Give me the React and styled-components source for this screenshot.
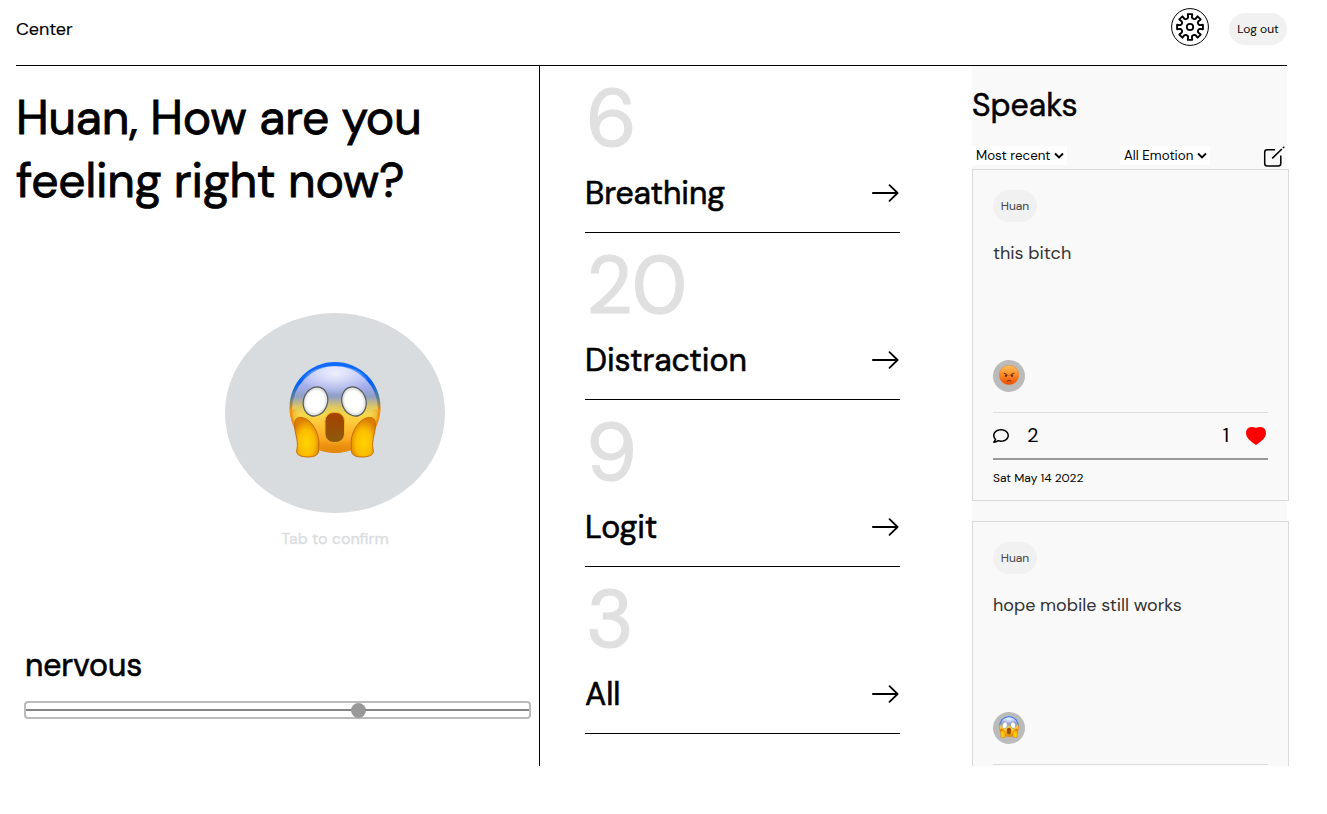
import React from "react";
import styled, { createGlobalStyle } from "styled-components";
import { FaRegComment } from "react-icons/fa";

const GlobalStyle = createGlobalStyle`
  *, *::before, *::after { box-sizing: border-box; }
  body {
    margin: 0;
    background: #fff;
    color: #000;
    font-family: "DM Sans", Lato, "Liberation Sans", sans-serif;
    overflow: hidden;
  }
  h1, h2, h3, p { margin: 0; font-weight: 400; }
  button, select { font-family: inherit; color: inherit; }
  svg { display: block; flex: none; }
`;

const Page = styled.div`
  width: 1271px;
  margin-left: 16px;
`;

const Header = styled.header`
  display: flex;
  justify-content: space-between;
  height: 66px;
  border-bottom: 1px solid #000;
`;

const Brand = styled.div`
  padding-top: 17px;
  font-size: 18px;
  line-height: 24px;
  letter-spacing: -0.1px;
  -webkit-text-stroke: 0.15px #000;
`;

const Actions = styled.div`
  display: flex;
  gap: 20px;
  padding-top: 8px;
`;

const Pill = styled.button`
  width: ${(p) => p.$width}px;
  height: 32px;
  margin-top: ${(p) => p.$offset || 0}px;
  padding: 0;
  border: 0;
  border-radius: 16px;
  background: #f1f1f1;
  color: ${(p) => p.$color || "#000"};
  font-size: 12px;
  line-height: 32px;
  white-space: nowrap;
`;

const Body = styled.main`
  display: grid;
  grid-template-columns: 569px 387px 315px;
  height: 700px;
`;

const Mood = styled.section`
  display: flex;
  flex-direction: column;
  width: 524px;
  height: 700px;
  border-right: 1px solid #000;
`;

const Greeting = styled.h1`
  height: 126px;
  margin-top: 20px;
  font-size: 48px;
  line-height: 63px;
  letter-spacing: -0.17px;
  white-space: nowrap;
  -webkit-text-stroke: 0.9px #000;
`;

const MoodPicker = styled.div`
  display: flex;
  flex-direction: column;
  align-items: center;
  width: 220px;
  margin: 101px 0 0 209px;
`;

const MoodOval = styled.div`
  display: flex;
  justify-content: center;
  width: 220px;
  height: 200px;
  padding-top: 48px;
  border-radius: 50%;
  background: #d8dcdf;
`;

const Hint = styled.p`
  margin-top: 14px;
  color: #d8dcdf;
  font-size: 16px;
  line-height: 24px;
  -webkit-text-stroke: 0.3px #d8dcdf;
`;

const MoodLabel = styled.h2`
  margin: 94px 0 0 9px;
  font-size: 32px;
  line-height: 40px;
  letter-spacing: -0.1px;
  -webkit-text-stroke: 0.6px #000;
`;

const Slider = styled.div`
  display: flex;
  align-items: center;
  width: 507px;
  height: 18px;
  margin: 16px 0 0 8px;
  border: 2px solid #bbb;
  border-radius: 4px;
`;

const Track = styled.div`
  flex: ${(p) => p.$share} 1 0;
  height: 2px;
  background: #858585;
`;

const Thumb = styled.div`
  flex: none;
  width: 15px;
  height: 15px;
  margin: 0 -1px;
  border-radius: 50%;
  background: #999;
`;

const Activities = styled.section`
  width: 315px;
`;

const Activity = styled.div`
  height: 167px;
  padding-top: 3px;
  border-bottom: 1px solid #000;
`;

const Count = styled.div`
  height: 99px;
  padding-left: 1px;
  font-size: 81px;
  line-height: 100px;
  color: #e0e0e0;
  -webkit-text-stroke: 1.2px #e0e0e0;
`;

const ActivityRow = styled.div`
  display: flex;
  align-items: center;
  justify-content: space-between;
  height: 50px;
`;

const ActivityName = styled.h2`
  font-size: 32px;
  line-height: 50px;
  letter-spacing: -0.05px;
  -webkit-text-stroke: 0.6px #000;
`;

const Feed = styled.section`
  width: 315px;
  height: 700px;
  background: #f9f9f9;
`;

const FeedTitle = styled.h2`
  padding-top: 18px;
  font-size: 32px;
  line-height: 42px;
  -webkit-text-stroke: 0.5px #000;
`;

const Filters = styled.div`
  display: flex;
  align-items: flex-start;
  justify-content: space-between;
  height: 23px;
  margin-top: 20px;
  padding-right: 2px;
`;

const Filter = styled.div`
  display: flex;
  align-items: center;
  justify-content: space-between;
  width: ${(p) => p.$width}px;
  height: 19px;
  padding: 0 3px 0 4px;
  background: #fff;
  font-size: 13.33px;
  white-space: nowrap;
`;

const CardList = styled.div`
  display: flex;
  flex-direction: column;
  gap: 20px;
  width: 317px;
  height: 597px;
  overflow: hidden;
`;

const Card = styled.article`
  flex: none;
  height: 332px;
  padding: 20px;
  border: 1px solid #d8dadc;
  background: #f9f9f9;
`;

const CardText = styled.p`
  height: 119px;
  margin-top: 19px;
  color: #333;
  font-size: 18px;
  line-height: 25px;
  letter-spacing: -0.04px;
`;

const Badge = styled.div`
  display: flex;
  justify-content: center;
  width: 32px;
  height: 32px;
  padding-top: ${(p) => p.$top}px;
  border-radius: 50%;
  background: #bbb;
`;

const Reactions = styled.div`
  display: flex;
  align-items: center;
  justify-content: space-between;
  height: 48px;
  margin-top: 20px;
  border-top: 1px solid #ddd;
  border-bottom: 2px solid #999;
  font-size: 20px;
  line-height: 26px;
`;

const Reaction = styled.div`
  display: flex;
  align-items: center;
  gap: ${(p) => p.$gap}px;
  padding-right: ${(p) => p.$end || 0}px;
`;

const ReactionCount = styled.span`
  padding-bottom: 1px;
`;

const DateLine = styled.p`
  margin-top: 8px;
  font-size: 12px;
  line-height: 20px;
`;

function GearIcon() {
  const points = [];
  const arc = Math.PI / 4;
  for (let i = 0; i < 8; i += 1) {
    const mid = i * arc - Math.PI / 2;
    [[-0.29, 8.9], [-0.19, 9.9], [-0.17, 13.1], [0.17, 13.1], [0.19, 9.9], [0.29, 8.9]].forEach(([a, r]) => {
      points.push(`${(19 + r * Math.cos(mid + a)).toFixed(2)},${(19 + r * Math.sin(mid + a)).toFixed(2)}`);
    });
  }
  return (
    <svg width="38" height="38" viewBox="0 0 38 38" fill="none" stroke="#000">
      <circle cx="19" cy="19" r="18.4" strokeWidth="1" />
      <polygon points={points.join(" ")} strokeWidth="1.9" strokeLinejoin="round" />
      <circle cx="19" cy="19" r="3.2" strokeWidth="1.8" />
    </svg>
  );
}

function ArrowIcon() {
  return (
    <svg width="29" height="20" viewBox="0 0 29 20" fill="none" stroke="#000" strokeWidth="1.8" strokeLinecap="round" strokeLinejoin="round">
      <path d="M1.9 10H26.6M18.5 2.2L26.6 10L18.5 17.8" />
    </svg>
  );
}

function ComposeIcon() {
  return (
    <svg width="22" height="22" viewBox="0 0 22 22" fill="none" stroke="#000" strokeWidth="1.5">
      <path d="M12 3.7H4.2A2.5 2.5 0 0 0 1.7 6.2V17.5A2.5 2.5 0 0 0 4.2 20H15.3A2.5 2.5 0 0 0 17.8 17.5V9.5" />
      <path d="M9.2 12.4L18.9 3M19.9 2L21.3 0.7" />
    </svg>
  );
}

function ChevronIcon() {
  return (
    <svg width="10" height="8" viewBox="0 0 10 8" fill="none" stroke="#000" strokeWidth="1.9">
      <path d="M1 1.5L5 5.4L9 1.5" />
    </svg>
  );
}

function HeartIcon() {
  return (
    <svg width="20" height="18" viewBox="0 0 20 18" fill="red">
      <path d="M10 0.8C8.4 0.1 7 0 5.3 0C2 0.2 0 2.7 0 6.3C0.2 11.2 5 14.6 10 18C15 14.6 19.8 11.2 20 6.3C20 2.7 18 0.2 14.7 0C13 0 11.6 0.1 10 0.8Z" />
    </svg>
  );
}

function ScreamFace({ width, height, id }) {
  return (
    <svg width={width} height={height} viewBox="0 0 92 97" preserveAspectRatio="none">
      <defs>
        <linearGradient id={`${id}face`} x1="0" y1="0" x2="0" y2="1">
          <stop offset="0" stopColor="#c4ccff" />
          <stop offset="0.24" stopColor="#a4adea" />
          <stop offset="0.35" stopColor="#8f9fc6" />
          <stop offset="0.47" stopColor="#dfc764" />
          <stop offset="0.56" stopColor="#f6d84a" />
          <stop offset="0.66" stopColor="#ffc63a" />
          <stop offset="0.84" stopColor="#fda821" />
          <stop offset="1" stopColor="#d87900" />
        </linearGradient>
        <linearGradient id={`${id}rim`} x1="0" y1="0" x2="0" y2="1">
          <stop offset="0" stopColor="#126aff" />
          <stop offset="0.24" stopColor="#0663f2" />
          <stop offset="0.4" stopColor="#5c8290" />
          <stop offset="0.53" stopColor="#f28b0c" />
          <stop offset="1" stopColor="#d77a08" />
        </linearGradient>
        <radialGradient id={`${id}shine`} cx="0.5" cy="0.2" r="0.55">
          <stop offset="0" stopColor="#fff" stopOpacity="0.75" />
          <stop offset="1" stopColor="#fff" stopOpacity="0" />
        </radialGradient>
        <radialGradient id={`${id}edge`} cx="0.5" cy="0.52" r="0.5">
          <stop offset="0.8" stopColor="#ef9810" stopOpacity="0" />
          <stop offset="1" stopColor="#ef9810" stopOpacity="0.7" />
        </radialGradient>
        <radialGradient id={`${id}eye`}>
          <stop offset="0.7" stopColor="#fff" />
          <stop offset="1" stopColor="#d2d2d2" />
        </radialGradient>
        <linearGradient id={`${id}mouth`} x1="0" y1="0" x2="0" y2="1">
          <stop offset="0" stopColor="#a84000" />
          <stop offset="1" stopColor="#8b5b0c" />
        </linearGradient>
        <radialGradient id={`${id}hand`} cx="0.48" cy="0.64" r="0.6">
          <stop offset="0" stopColor="#ffd400" />
          <stop offset="0.55" stopColor="#fbbd00" />
          <stop offset="1" stopColor="#dc7e00" />
        </radialGradient>
        <clipPath id={`${id}lower`}>
          <rect x="0" y="48" width="92" height="49" />
        </clipPath>
      </defs>
      <circle cx="46" cy="46.5" r="45.5" fill={`url(#${id}rim)`} />
      <ellipse cx="46" cy="48.5" rx="43" ry="43.3" fill={`url(#${id}face)`} />
      <circle cx="46" cy="46.5" r="45.5" fill={`url(#${id}edge)`} clipPath={`url(#${id}lower)`} />
      <ellipse cx="46" cy="24" rx="34" ry="19" fill={`url(#${id}shine)`} />
      <ellipse cx="26.5" cy="40.5" rx="12" ry="14.8" transform="rotate(18 26.5 40.5)" fill={`url(#${id}eye)`} stroke="#555d58" strokeWidth="1.2" />
      <ellipse cx="65" cy="40.5" rx="12" ry="14.8" transform="rotate(-18 65 40.5)" fill={`url(#${id}eye)`} stroke="#555d58" strokeWidth="1.2" />
      <rect x="36" y="51.5" width="19.5" height="30" rx="8.5" fill={`url(#${id}mouth)`} stroke="#eeb020" strokeWidth="1" />
      <path id={`${id}cheek`} d="M6 60C8 54 17 56 22 62C28 69 31 78 29.5 86C31 94 26 96 19 96C12 96 6 94 8 88C10 78 4 70 6 60Z" fill={`url(#${id}hand)`} stroke="#bf6500" strokeWidth="0.9" />
      <use href={`#${id}cheek`} transform="translate(92 0) scale(-1 1)" />
    </svg>
  );
}

function AngryFace() {
  return (
    <svg width="20" height="20" viewBox="0 0 20 20">
      <defs>
        <linearGradient id="angryFill" x1="0" y1="0" x2="0" y2="1">
          <stop offset="0" stopColor="#ffc05c" />
          <stop offset="0.45" stopColor="#fc8f2a" />
          <stop offset="1" stopColor="#f04900" />
        </linearGradient>
      </defs>
      <circle cx="10" cy="10" r="9.8" fill="url(#angryFill)" stroke="#e77717" strokeWidth="0.4" />
      <path d="M5 8.2Q8.2 9 8.8 10.3M15 8.2Q11.8 9 11.2 10.3" fill="none" stroke="#602609" strokeWidth="0.9" strokeLinecap="round" />
      <ellipse cx="6.9" cy="10.8" rx="1" ry="1.3" fill="#552207" />
      <ellipse cx="13.1" cy="10.8" rx="1" ry="1.3" fill="#552207" />
      <path d="M8.2 16Q10 14.6 11.8 16" fill="none" stroke="#602609" strokeWidth="0.9" strokeLinecap="round" />
    </svg>
  );
}

const activities = [
  { count: 6, name: "Breathing" },
  { count: 20, name: "Distraction" },
  { count: 9, name: "Logit" },
  { count: 3, name: "All" },
];

const posts = [
  { id: "a", text: "this bitch", mood: "angry", comments: 2, likes: 1, date: "Sat May 14 2022" },
  { id: "b", text: "hope mobile still works", mood: "scream" },
];

function Post({ post }) {
  return (
    <Card>
      <Pill $width={44} $color="#444">Huan</Pill>
      <CardText>{post.text}</CardText>
      <Badge $top={post.mood === "angry" ? 5 : 4}>
        {post.mood === "angry" ? <AngryFace /> : <ScreamFace width={20} height={22} id="small" />}
      </Badge>
      <Reactions>
        {post.comments && (
          <Reaction $gap={18}>
            <FaRegComment size={16} />
            <ReactionCount>{post.comments}</ReactionCount>
          </Reaction>
        )}
        {post.likes && (
          <Reaction $gap={17} $end={2}>
            <ReactionCount>{post.likes}</ReactionCount>
            <HeartIcon />
          </Reaction>
        )}
      </Reactions>
      {post.date && <DateLine>{post.date}</DateLine>}
    </Card>
  );
}

export default function App() {
  return (
    <Page>
      <GlobalStyle />
      <Header>
        <Brand>Center</Brand>
        <Actions>
          <GearIcon />
          <Pill $width={58} $offset={5}>Log out</Pill>
        </Actions>
      </Header>
      <Body>
        <Mood>
          <Greeting>Huan, How are you<br />feeling right now?</Greeting>
          <MoodPicker>
            <MoodOval>
              <ScreamFace width={92} height={97} id="large" />
            </MoodOval>
            <Hint>Tab to confirm</Hint>
          </MoodPicker>
          <MoodLabel>nervous</MoodLabel>
          <Slider>
            <Track $share={66.6} />
            <Thumb />
            <Track $share={33.4} />
          </Slider>
        </Mood>
        <Activities>
          {activities.map((a) => (
            <Activity key={a.name}>
              <Count>{a.count}</Count>
              <ActivityRow>
                <ActivityName>{a.name}</ActivityName>
                <ArrowIcon />
              </ActivityRow>
            </Activity>
          ))}
        </Activities>
        <Feed>
          <FeedTitle>Speaks</FeedTitle>
          <Filters>
            <Filter $width={95}>Most recent<ChevronIcon /></Filter>
            <Filter $width={90}>All Emotion<ChevronIcon /></Filter>
            <ComposeIcon />
          </Filters>
          <CardList>
            {posts.map((post) => <Post key={post.id} post={post} />)}
          </CardList>
        </Feed>
      </Body>
    </Page>
  );
}
